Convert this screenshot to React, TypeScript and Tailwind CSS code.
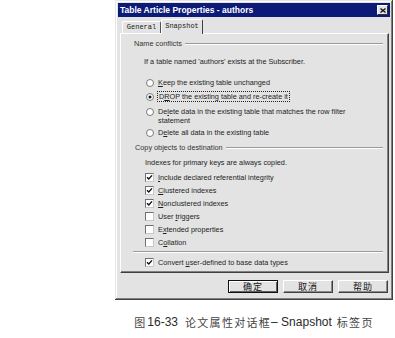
import React from "react";

const Radio = ({ on }: { on?: boolean }) => (
  <svg width="8" height="8" viewBox="0 0 8 8" className="shrink-0 mt-[1px]">
    <circle cx="4" cy="4" r="3.5" fill="#fff" stroke="#7a7a7a" strokeWidth="1" />
    {on && <circle cx="4" cy="4" r="1.5" fill="#111" />}
  </svg>
);

const Check = ({ on }: { on?: boolean }) => (
  <span className="shrink-0 w-[9px] h-[9px] bg-white border border-t-[#707070] border-l-[#707070] border-r-[#c8c8c8] border-b-[#c8c8c8] flex items-center justify-center">
    {on && (
      <svg width="7" height="7" viewBox="0 0 7 7">
        <path d="M1 3.2 L2.8 5 L6 1.4" fill="none" stroke="#111" strokeWidth="1.4" />
      </svg>
    )}
  </span>
);

const RadioRow = (props: { on?: boolean; className: string; children: React.ReactNode }) => (
  <div className={`flex items-start gap-[4px] pl-[25px] ${props.className}`}>
    <Radio on={props.on} />
    <span>{props.children}</span>
  </div>
);

const CheckRow = (props: { on?: boolean; className: string; children: React.ReactNode }) => (
  <div className={`flex items-center gap-[4px] pl-[24px] h-[13px] ${props.className}`}>
    <Check on={props.on} />
    <span>{props.children}</span>
  </div>
);

const GroupHead = (props: { label: string; className: string }) => (
  <div className={`flex items-center h-[10px] ${props.className}`}>
    <span className="text-[#333]">{props.label}</span>
    <span className="flex-1 ml-[3px] mr-[5px] border-t border-t-[#9a9a9a] border-b border-b-white" />
  </div>
);

const Button = (props: { label: string; main?: boolean }) => (
  <div
    className={`w-[50px] h-[13px] flex items-center justify-center bg-[#e3e3e3] text-[9px] tracking-[1px] font-['Noto_Sans_CJK_SC',sans-serif] ${
      props.main
        ? "border border-[#111] shadow-[inset_1px_1px_#fff,inset_-1px_-1px_#606060]"
        : "border border-t-white border-l-white border-r-[#404040] border-b-[#404040] shadow-[inset_-1px_-1px_#8a8a8a]"
    }`}
  >
    {props.label}
  </div>
);

export default function App() {
  return (
    <div className="w-[395px] h-[338px] bg-white overflow-hidden font-['Liberation_Sans',Arial,sans-serif] text-[#1e1e1e]">
      <div className="ml-[115px] w-[278px] h-[300px] bg-[#e3e3e3] p-[3px] flex flex-col shadow-[inset_-1px_-1px_#404040,inset_1px_1px_#e6e6e6,inset_-2px_-2px_#808080,inset_2px_2px_#fff]">
        <div className="h-[14px] bg-[#0c1a78] flex items-center justify-between pl-[2px] pr-[2px]">
          <span className="text-white font-bold text-[8.5px] leading-none">Table Article Properties - authors</span>
          <span className="w-[11px] h-[10px] bg-[#e3e3e3] border border-t-white border-l-white border-r-[#303030] border-b-[#303030] flex items-center justify-center">
            <svg width="6" height="5" viewBox="0 0 6 5">
              <path d="M0.5 0.5 L5.5 4.5 M5.5 0.5 L0.5 4.5" stroke="#111" strokeWidth="1.3" />
            </svg>
          </span>
        </div>

        <div className="mt-[2px] h-[14px] flex items-end pl-[4px] font-['Liberation_Mono',monospace] text-[7px] text-[#222]">
          <div className="w-[39px] h-[12px] flex items-center justify-center border-t border-l border-t-white border-l-white border-r border-r-[#505050] rounded-t-[2px]">
            General
          </div>
          <div className="relative z-10 w-[42px] h-[15px] -mb-[1px] bg-[#e3e3e3] flex items-center justify-center pb-[2px] border-t border-l border-t-white border-l-white border-r border-r-[#404040] rounded-t-[2px]">
            Snapshot
          </div>
        </div>

        <div className="ml-[2px] w-[269px] h-[240px] border border-t-white border-l-white border-r-[#404040] border-b-[#404040] shadow-[inset_-1px_-1px_#808080] pt-[5px] text-[7.3px] leading-[10px]">
          <GroupHead className="pl-[13px]" label="Name conflicts" />
          <div className="mt-[8px] pl-[23px] h-[10px]">If a table named 'authors' exists at the Subscriber.</div>
          <RadioRow className="mt-[11px] h-[10px]">
            <u>K</u>eep the existing table unchanged
          </RadioRow>
          <RadioRow on className="mt-[4px] h-[10px]">
            <span className="outline-1 outline-dotted outline-[#222] px-[1px]">
              D<u>R</u>OP the existing table and re-create it
            </span>
          </RadioRow>
          <RadioRow className="mt-[5px] leading-[9px]">
            De<u>l</u>ete data in the existing table that matches the row filter
            <br />
            statement
          </RadioRow>
          <RadioRow className="mt-[3px] h-[10px]">
            D<u>e</u>lete all data in the existing table
          </RadioRow>
          <GroupHead className="mt-[5px] pl-[14px]" label="Copy objects to destination" />
          <div className="mt-[5px] pl-[24px] h-[10px]">Indexes for primary keys are always copied.</div>
          <CheckRow on className="mt-[3px]">
            <u>I</u>nclude declared referential integrity
          </CheckRow>
          <CheckRow on className="">
            <u>C</u>lustered indexes
          </CheckRow>
          <CheckRow on className="">
            <u>N</u>onclustered indexes
          </CheckRow>
          <CheckRow className="">
            User <u>t</u>riggers
          </CheckRow>
          <CheckRow className="">
            E<u>x</u>tended properties
          </CheckRow>
          <CheckRow className="">
            C<u>o</u>llation
          </CheckRow>
          <div className="mt-[2px] ml-[12px] mr-[5px] border-t border-t-[#9a9a9a] border-b border-b-white" />
          <CheckRow on className="mt-[3px]">
            Convert <u>u</u>ser-defined to base data types
          </CheckRow>
        </div>

        <div className="mt-[7px] flex justify-end gap-[5px] pr-[2px] text-[#111]">
          <Button main label="确定" />
          <Button label="取消" />
          <Button label="帮助" />
        </div>
      </div>

      <div className="ml-[115px] w-[278px] mt-[15px] h-[14px] flex items-center justify-center text-[#2a2a2a]">
        <span className="font-['Noto_Sans_CJK_SC',sans-serif] text-[11px] text-[#444]">图</span>
        <span className="ml-[2px] text-[12px]">16-33</span>
        <span className="ml-[7px] font-['Noto_Sans_CJK_SC',sans-serif] text-[11px] tracking-[1.3px] text-[#444]">论文属性对话框</span>
        <span className="text-[12px]">– Snapshot</span>
        <span className="ml-[5px] font-['Noto_Sans_CJK_SC',sans-serif] text-[11px] tracking-[1.3px] text-[#444]">标签页</span>
      </div>
    </div>
  );
}
